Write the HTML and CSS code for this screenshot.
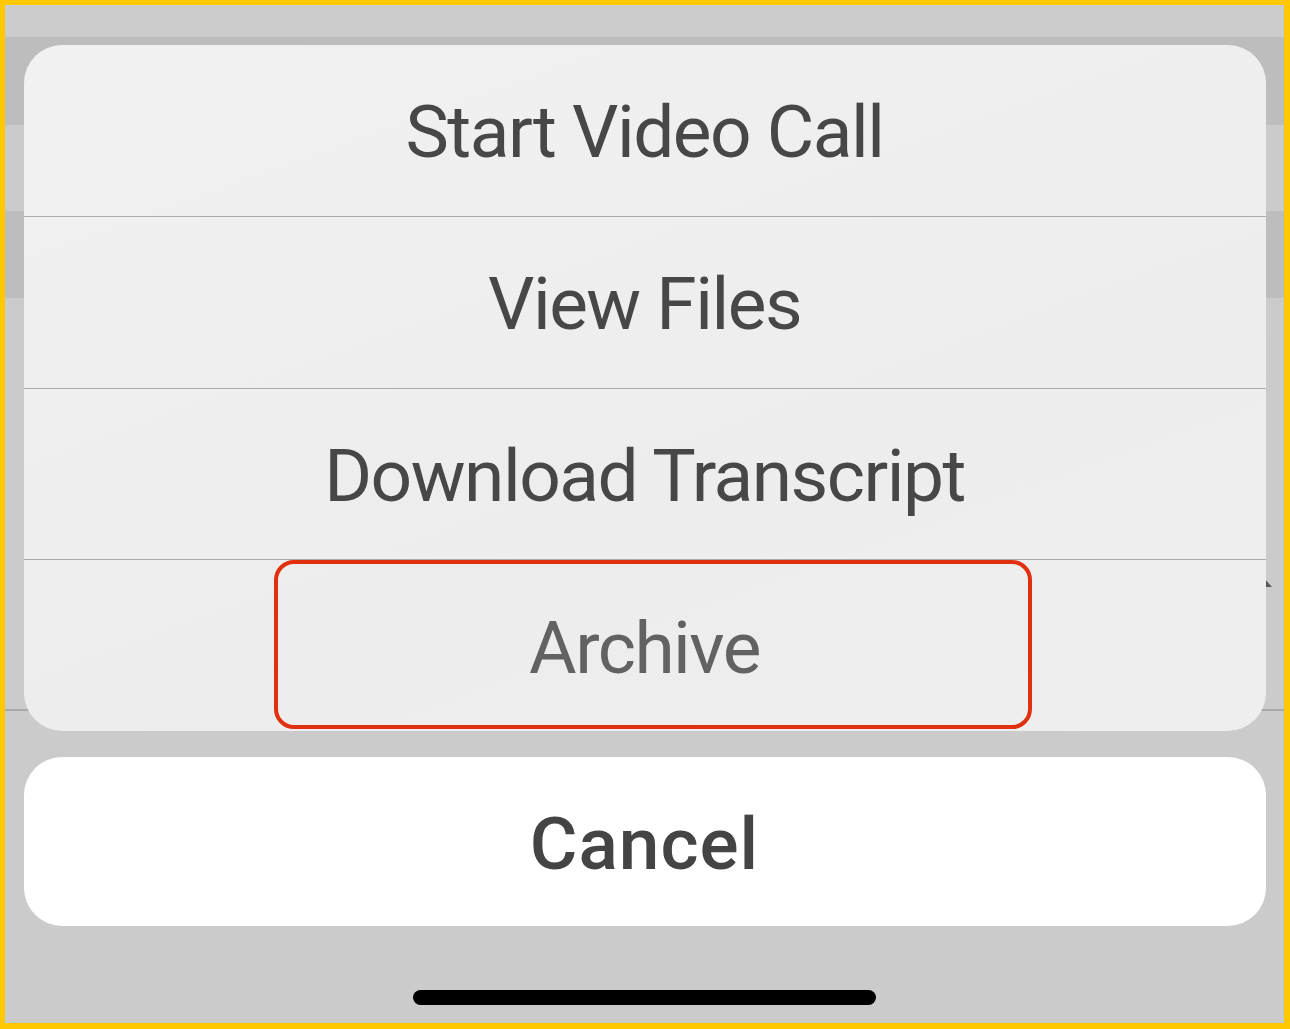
FILE: index.html
```html
<!DOCTYPE html>
<html>
<head>
<meta charset="utf-8">
<link rel="stylesheet" href="styles.css">
</head>
<body>
<div class="frame">
  <div class="screen">
    <span class="bg-arrow"></span>
    <div class="sheet">
      <div class="action">Start Video Call</div>
      <div class="action">View Files</div>
      <div class="action">Download Transcript</div>
      <div class="action muted">Archive<span class="highlight"></span></div>
    </div>
    <div class="cancel">Cancel</div>
    <div class="home-indicator"></div>
  </div>
</div>
</body>
</html>
```
FILE: styles.css
```css
html, body {
  margin: 0;
  padding: 0;
}
body {
  font-family: Roboto, "Liberation Sans", sans-serif;
  background: #ffc800;
}
.frame {
  width: 1290px;
  height: 1029px;
  box-sizing: border-box;
  border-style: solid;
  border-color: #ffc800;
  border-width: 5px 6px 6px 5px;
}
.screen {
  position: relative;
  height: 100%;
  display: flex;
  flex-direction: column;
  align-items: center;
  background: linear-gradient(to bottom,
    #cccccc 0, #cccccc 32px,
    #bdbdbd 32px, #bdbdbd 120px,
    #cbcbcb 120px, #cbcbcb 206px,
    #bdbdbd 206px, #bdbdbd 293px,
    #cbcbcb 293px, #cbcbcb 704px,
    #a9a9a9 704px, #a9a9a9 706px,
    #cbcbcb 706px, #cbcbcb 100%);
}
.bg-arrow {
  position: absolute;
  left: 1251px;
  top: 573px;
  width: 0;
  height: 0;
  border-left: 8px solid transparent;
  border-right: 8px solid transparent;
  border-bottom: 9px solid #5a5a5a;
}
.sheet {
  position: relative;
  z-index: 1;
  margin-top: 40px;
  width: 1242px;
  height: 686px;
  background: linear-gradient(160deg, #f1f1f1 0%, #ededed 60%, #eeeeee 100%);
  border-radius: 38px;
  display: flex;
  flex-direction: column;
  overflow: hidden;
  flex: none;
}
.action {
  position: relative;
  flex: 1;
  display: flex;
  align-items: center;
  justify-content: center;
  padding-top: 4px;
  font-size: 73px;
  font-weight: 400;
  color: #474747;
  letter-spacing: -1.5px;
}
.action + .action {
  border-top: 1px solid #ababab;
}
.action.muted {
  color: #626262;
}
.highlight {
  position: absolute;
  left: 250px;
  top: 0;
  width: 758px;
  height: 169px;
  box-sizing: border-box;
  border: 4px solid #e0300f;
  border-radius: 20px;
}
.cancel {
  margin-top: 26px;
  width: 1242px;
  height: 169px;
  flex: none;
  box-sizing: border-box;
  padding-top: 4px;
  background: #ffffff;
  border-radius: 38px;
  display: flex;
  align-items: center;
  justify-content: center;
  font-size: 73px;
  font-weight: 500;
  color: #444444;
  letter-spacing: 1px;
}
.home-indicator {
  margin-top: 64px;
  width: 463px;
  height: 15px;
  border-radius: 8px;
  background: #000;
  flex: none;
}
```
